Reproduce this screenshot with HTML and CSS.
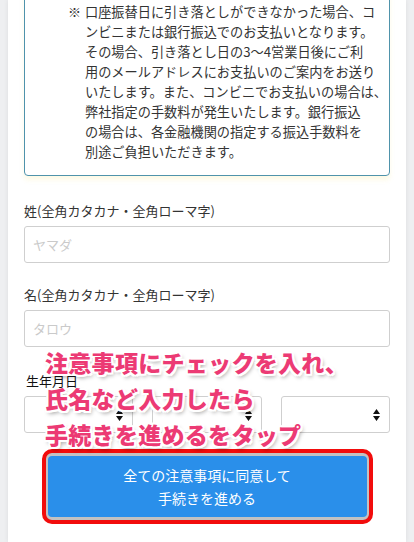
FILE: index.html
```html
<!DOCTYPE html>
<html lang="ja">
<head>
<meta charset="utf-8">
<title>お申し込み</title>
<link rel="stylesheet" href="styles.css">
</head>
<body>
<div class="card">
  <div class="notice">
    <span class="mark">※</span>
    <div class="notice-text">
      <span class="ln">口座振替日に引き落としができなかった場合、コ</span>
      <span class="ln">ンビニまたは銀行振込でのお支払いとなります。</span>
      <span class="ln">その場合、引き落とし日の3〜4営業日後にご利</span>
      <span class="ln">用のメールアドレスにお支払いのご案内をお送り</span>
      <span class="ln">いたします。また、コンビニでお支払いの場合は、</span>
      <span class="ln">弊社指定の手数料が発生いたします。銀行振込</span>
      <span class="ln">の場合は、各金融機関の指定する振込手数料を</span>
      <span class="ln">別途ご負担いただきます。</span>
    </div>
  </div>

  <label class="label first">姓(全角カタカナ・全角ローマ字)</label>
  <input class="field" type="text" placeholder="ヤマダ">

  <label class="label">名(全角カタカナ・全角ローマ字)</label>
  <input class="field" type="text" placeholder="タロウ">

  <div class="label dob">生年月日</div>
  <div class="selects">
    <div class="sel"><svg class="arr" width="7" height="12" viewBox="0 0 7 12"><path d="M3.5 0 L7 5 L0 5 Z M0 7 L7 7 L3.5 12 Z" fill="#111"/></svg></div>
    <div class="sel"><svg class="arr" width="7" height="12" viewBox="0 0 7 12"><path d="M3.5 0 L7 5 L0 5 Z M0 7 L7 7 L3.5 12 Z" fill="#111"/></svg></div>
    <div class="sel"><svg class="arr" width="7" height="12" viewBox="0 0 7 12"><path d="M3.5 0 L7 5 L0 5 Z M0 7 L7 7 L3.5 12 Z" fill="#111"/></svg></div>
  </div>

  <div class="btn-frame">
    <button class="btn" type="button">全ての注意事項に同意して<br>手続きを進める</button>
  </div>

  <div class="annotation">
    <div class="an-line">注意事項にチェックを入れ、</div>
    <div class="an-line">氏名など入力したら</div>
    <div class="an-line">手続きを進めるをタップ</div>
  </div>
</div>
</body>
</html>
```

FILE: styles.css
```css
html, body {
  margin: 0;
  padding: 0;
}
body {
  background: #eeeff1;
  font-family: "Noto Sans CJK JP", "Noto Sans", sans-serif;
  color: #333;
  overflow: hidden;
  height: 542px;
}
.card {
  position: relative;
  display: flow-root;
  margin: 0 8px;
  background: #fff;
  height: 542px;
  padding: 0 16px;
  box-shadow: 0 0 5px rgba(0, 0, 0, 0.08);
}
.notice {
  display: flex;
  margin-top: -15px;
  border: 1px solid #4f93ab;
  border-radius: 4px;
  padding: 16px 8px 13px 43px;
  box-shadow: 0 4px 5px rgba(250, 245, 200, 0.45);
}
.mark {
  width: 17px;
  flex: none;
  font-size: 13px;
  line-height: 20px;
  color: #333;
}
.notice-text {
  display: flex;
  flex-direction: column;
}
.ln {
  font-size: 13.2px;
  line-height: 20px;
  white-space: nowrap;
  color: #333;
}
.label {
  display: block;
  font-size: 13px;
  line-height: 18px;
  margin: 23px 0 6px;
  color: #333;
}
.label.first {
  margin-top: 26px;
}
.label.dob {
  position: relative;
  z-index: 2;
  line-height: 12px;
  margin-top: 28px;
  margin-bottom: 9px;
  padding-left: 2px;
  color: #111;
}
.field {
  display: block;
  box-sizing: border-box;
  width: 100%;
  height: 37px;
  border: 1px solid #cfcfcf;
  border-radius: 3px;
  padding: 0 8px;
  font-family: inherit;
  font-size: 13px;
  color: #333;
  background: #fff;
  outline: none;
}
.field::placeholder {
  color: #cacaca;
}
.selects {
  display: grid;
  grid-template-columns: repeat(3, 1fr);
  gap: 19px;
}
.sel {
  box-sizing: border-box;
  height: 37px;
  border: 1px solid #cfcfcf;
  border-radius: 3px;
  display: flex;
  align-items: center;
  justify-content: flex-end;
  padding-right: 9px;
  background: #fff;
}
.btn-frame {
  width: 331px;
  box-sizing: border-box;
  margin: 16px auto 0;
  border: 4px solid #f20c0c;
  border-radius: 10px;
  padding: 3px 2px;
  background: #c2c2c2;
}
.btn {
  display: block;
  width: 100%;
  height: 61px;
  border: none;
  border-radius: 4px;
  background: #2a8fea;
  color: #fff;
  font-family: inherit;
  font-size: 14px;
  line-height: 23px;
  padding: 0;
}
.annotation {
  position: absolute;
  z-index: 1;
  left: 37px;
  top: 350px;
  display: flex;
  flex-direction: column;
  gap: 12px;
  font-size: 23px;
  letter-spacing: 0.3px;
  line-height: 24px;
  font-weight: 900;
  color: #ec3a74;
  white-space: nowrap;
  text-shadow:
    2px 0 0 #fff, -2px 0 0 #fff, 0 2px 0 #fff, 0 -2px 0 #fff,
    2px 2px 0 #fff, -2px -2px 0 #fff, 2px -2px 0 #fff, -2px 2px 0 #fff,
    2px 3px 4px rgba(0, 0, 0, 0.4);
}
```
